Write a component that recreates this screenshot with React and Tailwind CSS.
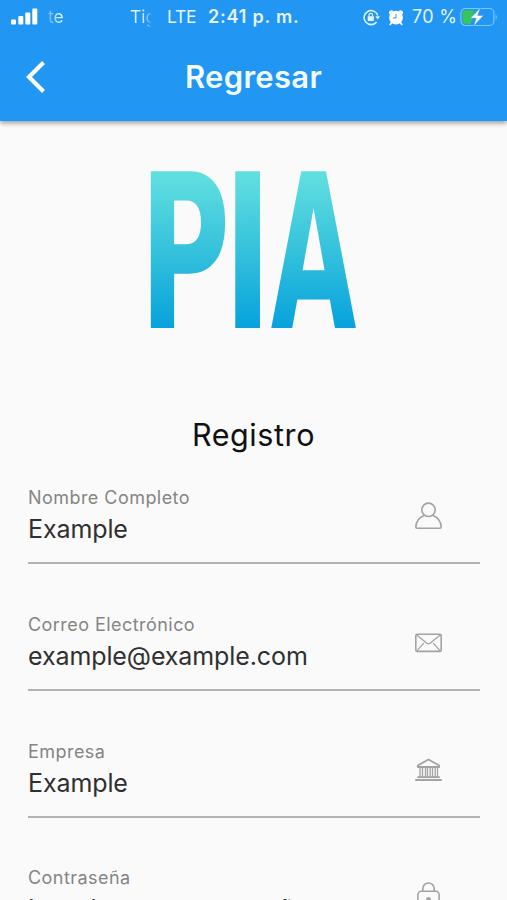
import React from "react";

const stroke = { fill: "none", stroke: "#a3a3a3", strokeWidth: 1.6, strokeLinejoin: "round", strokeLinecap: "round" };

function UserIcon() {
  return (
    <svg width="28" height="30" viewBox="0 0 28 30" {...stroke}>
      <circle cx="13.5" cy="8.8" r="6.7" />
      <path d="M9 14.5C4 16.5 1.1 20.5 0.8 25.8Q0.8 27.3 2.2 27.3H24.8Q26.2 27.3 26.2 25.8C25.9 20.5 23 16.5 18 14.5" />
    </svg>
  );
}

function MailIcon() {
  return (
    <svg width="28" height="30" viewBox="0 0 28 30" {...stroke}>
      <rect x="0.8" y="6.2" width="25.4" height="17.2" rx="1.5" />
      <path d="M2 7.2L11.9 15.3Q13.5 16.5 15.1 15.3L25 7.2M2.3 22.4L8.5 15.4M24.7 22.4L18.5 15.4" strokeWidth="1.3" />
    </svg>
  );
}

function BankIcon() {
  return (
    <svg width="28" height="30" viewBox="0 0 28 30" {...stroke}>
      <path d="M13.5 4.5L2.8 10.5V12H24.2V10.5ZM3 22.2H24M0.9 25H26.1" strokeWidth="1.8" />
      <path d="M5 12.5V22M7.5 12.5V22M10.5 12.5V22M12.5 12.5V22M15.2 12.5V22M17.5 12.5V22M20.2 12.5V22M22.5 12.5V22" strokeWidth="1.3" />
    </svg>
  );
}

function LockIcon() {
  return (
    <svg width="28" height="30" viewBox="0 0 28 30" {...stroke}>
      <path d="M7.8 10.3V7.7A5.7 5.7 0 0 1 19.2 7.7V10.3" />
      <rect x="2.9" y="10.3" width="21.2" height="17" rx="3.5" />
      <circle cx="13.5" cy="18.5" r="1.6" fill="#a3a3a3" />
    </svg>
  );
}

function Field({ label, value, icon }) {
  return (
    <div className="h-[126.8px] shrink-0">
      <div className="flex h-[79px] items-start justify-between border-b-2 border-[#b3b3b3]">
        <div>
          <div className="h-[26px] text-[18px] leading-[26px] tracking-[0.45px] text-[#858585]">{label}</div>
          <div className="h-9 text-[25px] leading-9 tracking-[-0.1px] text-[#303030]">{value}</div>
        </div>
        <div className="mr-[37px] mt-[16px]">{icon}</div>
      </div>
    </div>
  );
}

function StatusBar() {
  return (
    <div className="flex h-[34px] items-center text-[17.5px] leading-[34px] text-[#e3f3ff]">
      <svg className="ml-[11px] shrink-0" width="27" height="18" viewBox="0 0 27 18" fill="#fff">
        <rect x="0" y="11.5" width="5" height="5" rx="1" />
        <rect x="7.3" y="8" width="5" height="8.5" rx="1" />
        <rect x="14.3" y="4.5" width="5" height="12" rx="1" />
        <rect x="21.3" y="0.5" width="5" height="16" rx="1" />
      </svg>
      <span className="ml-[10px] w-[82px] bg-gradient-to-r from-[#5ab2f8] to-[#e3f3ff] to-[12px] bg-clip-text text-transparent">te</span>
      <span className="w-[22px] overflow-hidden bg-gradient-to-r from-[#e3f3ff] from-[12px] to-[#2196f3] bg-clip-text text-transparent">Tig</span>
      <span className="ml-[15px] w-[41px] tracking-[-0.2px]">LTE</span>
      <span className="w-[155px] whitespace-nowrap text-[18px] font-semibold tracking-[0.8px]">2:41 p. m.</span>
      <svg className="shrink-0" width="17" height="17" viewBox="0 0 17 17" fill="none" stroke="#e3f3ff" strokeWidth="1.6">
        <path d="M14.8 6.6A7 7 0 1 0 13.6 12.9" />
        <path d="M12.3 7.2H17L14.7 10.5Z" fill="#e3f3ff" stroke="none" />
        <rect x="4.7" y="7.3" width="6.2" height="4.6" rx="0.6" fill="#e3f3ff" stroke="none" />
        <path d="M6 7.5V6.2A1.8 1.8 0 0 1 9.6 6.2V7.5" strokeWidth="1.2" />
      </svg>
      <svg className="ml-[8px] shrink-0" width="16" height="17" viewBox="0 0 16 17" fill="#fff">
        <circle cx="8" cy="8.7" r="6.9" />
        <path d="M1 4.6Q0.2 1.2 4.4 1.2L5 2.6L2 5.6ZM15 4.6Q15.8 1.2 11.6 1.2L11 2.6L14 5.6Z" />
        <path d="M3.6 13.5L2.2 15.5M12.4 13.5L13.8 15.5" stroke="#fff" strokeWidth="1.6" strokeLinecap="round" />
        <path d="M8 4.8V9H5" fill="none" stroke="#2196f3" strokeWidth="1" />
      </svg>
      <span className="ml-[8px] w-[48px] whitespace-nowrap text-[18px] tracking-[0.3px]">70 %</span>
      <svg className="shrink-0" width="38" height="20" viewBox="0 0 38 20">
        <rect x="0.9" y="1.5" width="33" height="17" rx="4.5" fill="none" stroke="#80c4fa" strokeWidth="1.2" />
        <path d="M35.7 7.2Q38 10 35.7 12.8Z" fill="#80c4fa" />
        <path d="M5 3.3H14L11 16.7H5Q2.6 16.7 2.6 14V6Q2.6 3.3 5 3.3Z" fill="#35c75a" />
        <path d="M20.4 0.8L10.4 11.3H16.2L13.4 19.2L23.6 8.5H17.8Z" fill="#fff" stroke="#2196f3" strokeWidth="0.5" />
      </svg>
    </div>
  );
}

function Logo() {
  return (
    <svg className="mx-auto mt-[48px] block shrink-0 overflow-visible" width="208" height="160" viewBox="0 0 208 160">
      <defs>
        <linearGradient id="logo" gradientUnits="userSpaceOnUse" x1="0" y1="-157" x2="0" y2="0">
          <stop offset="0" stopColor="#62e0df" />
          <stop offset="0.5" stopColor="#35c2dc" />
          <stop offset="1" stopColor="#06a2dc" />
        </linearGradient>
      </defs>
      <g fontFamily="DejaVu Sans, sans-serif" fontWeight="700" fontSize="215" fill="url(#logo)" textRendering="geometricPrecision">
        <text transform="translate(-10.4 159.3) scale(0.575 1)">P</text>
        <text transform="translate(73.2 159.3) scale(0.61 1)">I</text>
        <text transform="translate(120.8 159.3) scale(0.515 1)">A</text>
      </g>
    </svg>
  );
}

export default function App() {
  return (
    <div className="flex h-[900px] w-full flex-col overflow-hidden bg-[#fafafa] font-['Inter',sans-serif]">
      <header className="h-[121px] shrink-0 bg-[#2196f3] shadow-[0_2px_5px_rgba(0,0,0,0.4)]">
        <StatusBar />
        <div className="grid h-[86px] grid-cols-[100px_1fr_100px] items-center">
          <svg className="ml-[24px]" width="24" height="34" viewBox="0 0 24 34" fill="none" stroke="#fff" strokeWidth="4.2">
            <path d="M19.5 2.5L5 17L19.5 31.5" />
          </svg>
          <h1 className="text-center text-[31px] font-semibold leading-[40px] tracking-[0.3px] text-[#f2fbff]">Regresar</h1>
        </div>
      </header>
      <Logo />
      <h2 className="mt-[85px] h-[42px] shrink-0 text-center text-[30.5px] leading-[42px] tracking-[0.6px] text-[#111]">Registro</h2>
      <main className="mt-[29px] pl-[28px] pr-[27px]">
        <Field label="Nombre Completo" value="Example" icon={<UserIcon />} />
        <Field label="Correo Electrónico" value="example@example.com" icon={<MailIcon />} />
        <Field label="Empresa" value="Example" icon={<BankIcon />} />
        <Field label="Contraseña" value="Introduce tu contraseña" icon={<LockIcon />} />
      </main>
    </div>
  );
}
